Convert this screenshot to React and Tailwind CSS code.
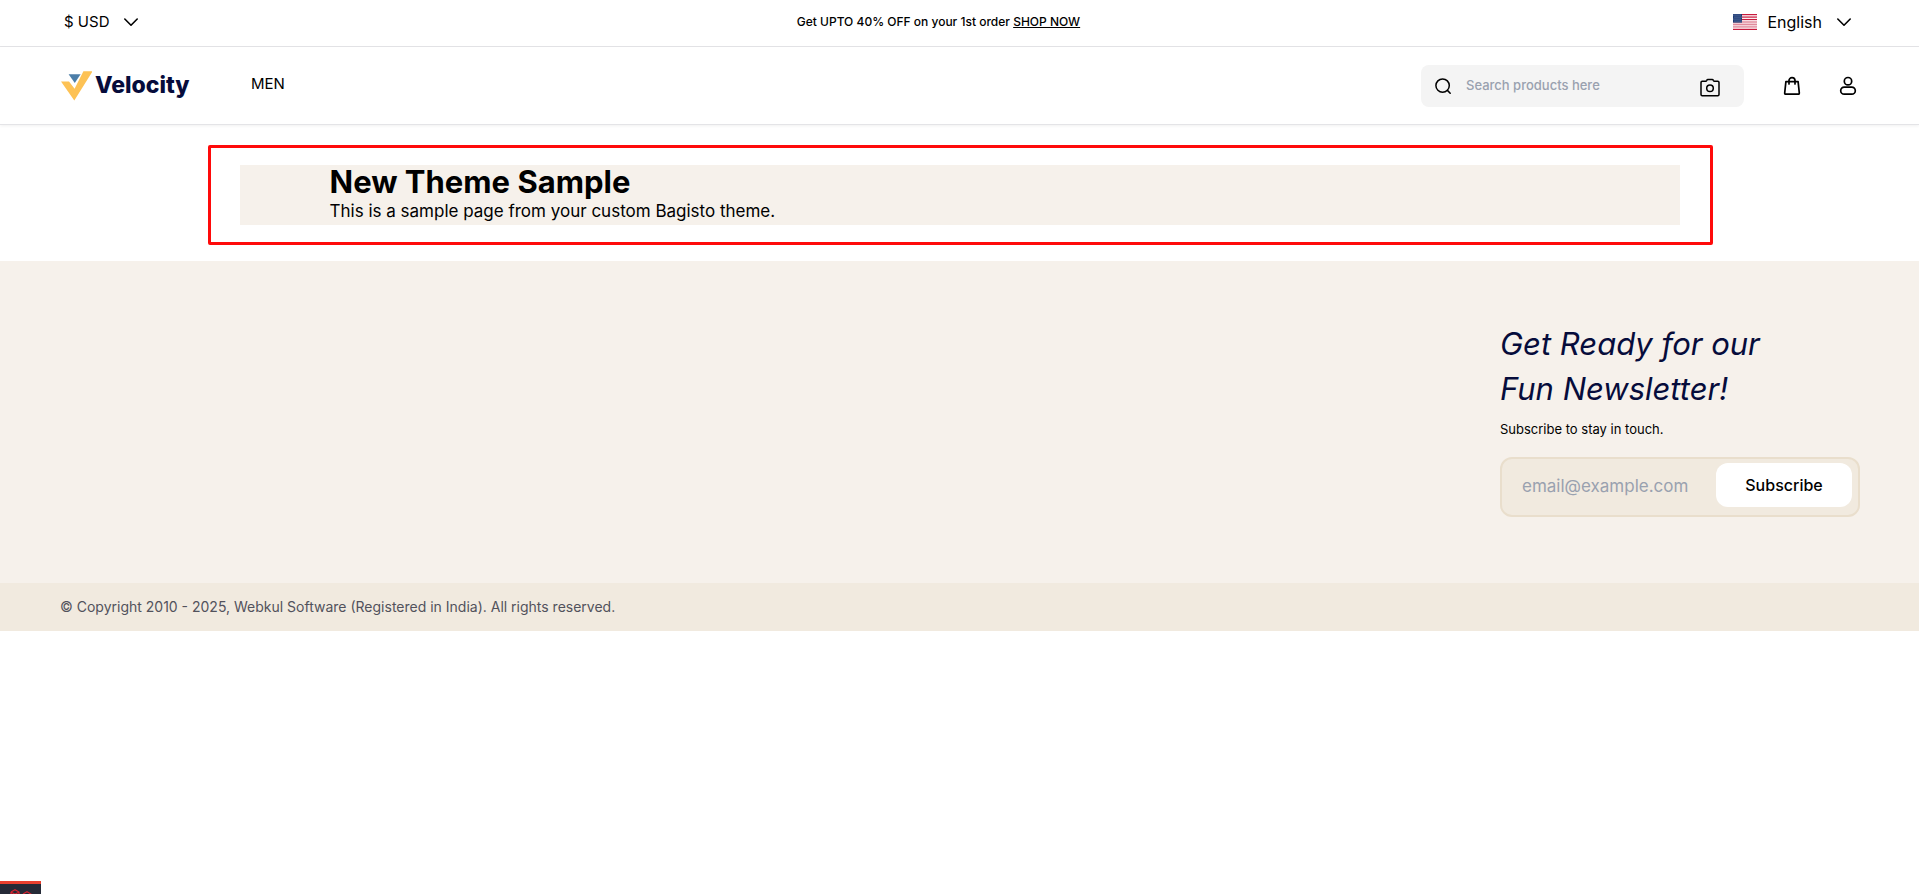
import React from "react";

function Chevron() {
  return (
    <svg className="size-6" viewBox="0 0 24 24" fill="none" stroke="currentColor" strokeWidth="1.6" strokeLinecap="round" strokeLinejoin="round" aria-hidden="true">
      <path d="M5.8 9l6.2 6.2L18.2 9" />
    </svg>
  );
}

function Flag() {
  const stripes = [0, 2, 4, 6, 8, 10, 12];
  return (
    <svg className="h-4 w-6" viewBox="0 0 24 16" aria-hidden="true">
      <rect width="24" height="16" fill="#fff" />
      {stripes.map((n) => (
        <rect key={n} y={(n * 16) / 13} width="24" height={16 / 13} fill={n > 5 && n < 11 ? "#d9758a" : "#c8193c"} />
      ))}
      <rect y="7" width="24" height="5.5" fill="#e8a5b2" opacity="0.45" />
      <rect width="9" height="8.6" fill="#1d3a72" />
      {[1, 3, 5, 7].map((y) =>
        [1, 3, 5, 7].map((x) => (
          <circle key={x + "-" + y} cx={x + (y % 4 === 1 ? 0 : 1)} cy={y} r="0.5" fill="#9fb4d6" />
        ))
      )}
    </svg>
  );
}

function Logo() {
  return (
    <a href="#home" aria-label="Velocity" className="flex h-[30px] w-[131px] items-center gap-[3px] text-[#060c3b]">
      <svg className="h-[30px] w-8 shrink-0" viewBox="0 0 32 30" aria-hidden="true">
        <path d="M1 10.500h8l5.600 7.200L23.400.2h9.300L14.300 29.500z" fill="#fdc255" />
        <path d="M8.600 3.200h12L14.800 12z" fill="#4c7ea8" />
      </svg>
      <span className="pb-0.5 text-[23px] leading-7 font-extrabold">Velocity</span>
    </a>
  );
}

function TopBar() {
  return (
    <div className="flex h-[47px] items-center justify-between border-b border-zinc-200 pr-[63px] pb-2.5 pl-16 pt-2">
      <button type="button" className="flex items-center gap-2.5 text-[15px]">
        $ USD
        <Chevron />
      </button>
      <p className="text-xs font-medium">
        Get UPTO 40% OFF on your 1st order{" "}
        <a href="#shop" className="underline">SHOP NOW</a>
      </p>
      <button type="button" className="flex items-center gap-2.5 text-base">
        <Flag />
        English
        <Chevron />
      </button>
    </div>
  );
}

function Header() {
  return (
    <header>
      <TopBar />
      <div className="flex h-[78px] items-center justify-between border-b border-zinc-200 pr-[59px] pl-[60px] shadow-[0_1px_3px_rgba(0,0,0,0.06)]">
        <div className="flex items-center gap-[60px]">
          <Logo />
          <nav className="pb-1">
            <a href="#men" className="text-[15px]">MEN</a>
          </nav>
        </div>
        <div className="flex items-center gap-8">
          <form role="search" className="mr-1 flex h-[42px] w-[323px] items-center rounded-lg bg-[#f4f4f4] pl-3 pr-[22px]">
            <label htmlFor="search" aria-label="Search" className="shrink-0">
              <svg className="size-5" viewBox="0 0 20 20" fill="none" stroke="currentColor" strokeWidth="1.5" strokeLinecap="round" aria-hidden="true">
                <circle cx="9.600" cy="9.600" r="6.700" />
                <path d="M14.400 14.400l2.800 2.800" />
              </svg>
            </label>
            <input id="search" type="text" placeholder="Search products here" className="ml-[13px] min-w-0 flex-1 bg-transparent text-[13px] font-medium outline-none placeholder:text-gray-400" />
            <button type="button" aria-label="Search by image" className="mt-1">
              <svg className="size-6" viewBox="0 0 24 24" fill="none" stroke="currentColor" strokeWidth="1.5" strokeLinejoin="round" aria-hidden="true">
                <path d="M4.200 5.200h3.500c.6 0 .8-.3 1.100-.9.200-.5.6-.7 1.100-.7h4.300c.5 0 .9.200 1.100.7.3.6.5.9 1.100.9h3.400c.8 0 1.200.5 1.200 1.200v12.100c0 .8-.4 1.200-1.200 1.200H4.200c-.8 0-1.200-.4-1.200-1.200V6.400c0-.7.400-1.200 1.200-1.200z" />
                <circle cx="12" cy="12.200" r="3.300" />
              </svg>
            </button>
          </form>
          <button type="button" aria-label="Shopping cart">
            <svg className="size-6" viewBox="0 0 24 24" fill="none" stroke="currentColor" strokeWidth="1.700" strokeLinecap="round" strokeLinejoin="round" aria-hidden="true">
              <path d="M5.900 7.700h12.200l1.200 11.200c.1.800-.3 1.300-1.100 1.300H5.800c-.8 0-1.200-.5-1.100-1.300z" />
              <path d="M9 10V6.600a3 3 0 0 1 6 0V10" />
            </svg>
          </button>
          <button type="button" aria-label="Profile">
            <svg className="size-6" viewBox="0 0 24 24" fill="none" stroke="currentColor" strokeWidth="1.700" aria-hidden="true">
              <circle cx="12" cy="7.200" r="3.700" />
              <rect x="4.700" y="13.100" width="14.600" height="7.100" rx="3.550" />
            </svg>
          </button>
        </div>
      </div>
    </header>
  );
}

function Footer() {
  return (
    <footer className="mt-9 bg-[#f6f1eb]">
      <div className="flex justify-end pr-[59px] pb-[66px] pl-[60px] pt-[60px]">
        <div className="w-[360px]">
          <h2 className="text-[31px] leading-[45px] text-[#060c3b] italic">
            Get Ready for our
            <br />
            Fun Newsletter!
          </h2>
          <p className="mt-2 text-[13px] leading-5">Subscribe to stay in touch.</p>
          <form className="mt-[18px] flex h-[60px] items-center rounded-xl border-2 border-[#e9decc] bg-[#f1eadf] pl-5">
            <input type="email" aria-label="Email" placeholder="email@example.com" className="min-w-0 flex-1 bg-transparent text-[17px] outline-none placeholder:text-gray-400" />
            <button type="button" className="mt-1 mr-1.5 h-11 w-[136px] self-start rounded-xl bg-white text-base font-medium">Subscribe</button>
          </form>
        </div>
      </div>
      <div className="bg-[#f1eadf] px-[60px] py-3.5">
        <p className="text-sm leading-5 text-zinc-600">© Copyright 2010 - 2025, Webkul Software (Registered in India). All rights reserved.</p>
      </div>
    </footer>
  );
}

function DebugBadge() {
  return (
    <div className="fixed bottom-0 left-0 h-[13px] w-[41px] overflow-hidden border-t-[3px] border-[#e8402f] bg-[#252a37]">
      <svg className="ml-2.5 mt-[5px] h-6 w-6" viewBox="0 0 24 24" fill="none" stroke="#d8232f" strokeWidth="1.200" aria-hidden="true">
        <path d="M1 3l4-2.200L9 3v4M1 3l4 2.200L9 3M1 3v12M13 5l4-2.200L21 5v4M13 5l4 2.200L21 5M13 5v5" />
      </svg>
    </div>
  );
}

export default function App() {
  return (
    <div className="bg-white font-[Inter,sans-serif] text-black">
      <Header />
      <main className="px-[60px] pt-10">
        <section className="relative mx-auto max-w-[1440px] bg-[#f6f1eb] px-[90px]">
          <h1 className="text-[31px] leading-[34px] font-bold">New Theme Sample</h1>
          <p className="pb-0.5 text-[17px] leading-6">This is a sample page from your custom Bagisto theme.</p>
          <div className="pointer-events-none absolute -top-5 -right-[33px] -bottom-5 -left-8 rounded-xs border-3 border-[#ff0a0a]" />
        </section>
      </main>
      <Footer />
      <DebugBadge />
    </div>
  );
}
